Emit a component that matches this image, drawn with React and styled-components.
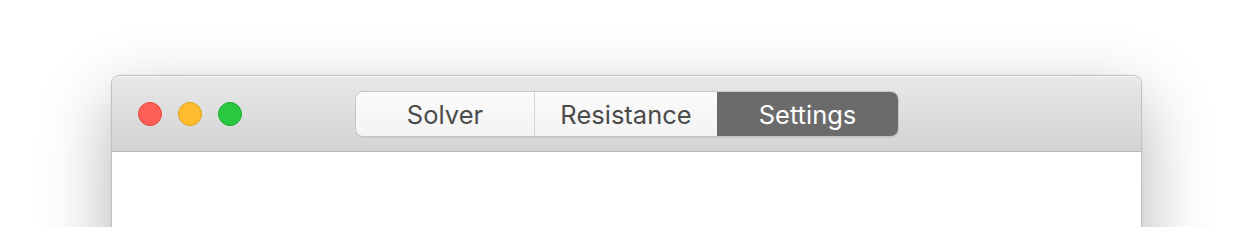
import React, { useState } from "react";
import styled, { createGlobalStyle } from "styled-components";

const GlobalStyle = createGlobalStyle`
  html, body {
    margin: 0;
    padding: 0;
    background: #ffffff;
  }
  body {
    font-family: Inter, "Noto Sans", "Liberation Sans", sans-serif;
    -webkit-font-smoothing: antialiased;
  }
`;

const Stage = styled.div`
  height: 227px;
  overflow: hidden;
  padding: 75px 111px 0;
  box-sizing: border-box;
  background: #ffffff;
`;

const Window = styled.div`
  height: 320px;
  background: #ffffff;
  border: 1px solid #c2c2c2;
  border-bottom: none;
  border-radius: 9px 9px 0 0;
  box-shadow: 0 24px 70px rgba(0, 0, 0, 0.3), 0 0 1px rgba(0, 0, 0, 0.2);
  overflow: hidden;
  box-sizing: border-box;
`;

const TitleBar = styled.div`
  height: 76px;
  box-sizing: border-box;
  display: grid;
  grid-template-columns: 1fr auto 1fr;
  align-items: center;
  padding: 0 25px 0 26px;
  background: linear-gradient(to bottom, #e9e9e9 0%, #d3d3d3 100%);
  border-bottom: 1px solid #b4b4b4;
  box-shadow: inset 0 1px 0 rgba(255, 255, 255, 0.6);
`;

const Lights = styled.div`
  display: flex;
  gap: 16px;
  align-items: center;
  margin-top: 1px;
`;

const Light = styled.span`
  width: 24px;
  height: 24px;
  border-radius: 50%;
  box-sizing: border-box;
  background: ${(p) => p.$fill};
  border: 1px solid ${(p) => p.$ring};
`;

const Segmented = styled.div`
  display: flex;
  height: 46px;
  border-radius: 8px;
  border: 1px solid #c6c6c6;
  box-shadow: 0 1px 0 rgba(0, 0, 0, 0.08);
  background: linear-gradient(to bottom, #fbfbfb, #f3f3f3);
  overflow: hidden;
  box-sizing: border-box;
`;

const Segment = styled.button`
  width: ${(p) => p.$width}px;
  height: 100%;
  margin: 0;
  padding: 2px 0 0;
  border: none;
  border-left: ${(p) => (p.$first ? "none" : "1px solid #d6d6d6")};
  background: ${(p) => (p.$active ? "#6b6b6b" : "transparent")};
  color: ${(p) => (p.$active ? "#ffffff" : "#4b4b4b")};
  font-family: Inter, "Noto Sans", "Liberation Sans", sans-serif;
  font-size: 25.5px;
  font-weight: 400;
  line-height: 1;
  cursor: default;
  outline: none;
`;

const Content = styled.div`
  background: #ffffff;
`;

const tabs = [
  { label: "Solver", width: 178 },
  { label: "Resistance", width: 183 },
  { label: "Settings", width: 181 },
];

export default function App() {
  const [active, setActive] = useState("Settings");

  return (
    <>
      <GlobalStyle />
      <Stage>
        <Window>
          <TitleBar>
            <Lights>
              <Light $fill="#fe5f57" $ring="#e2463f" />
              <Light $fill="#febc2e" $ring="#e1a116" />
              <Light $fill="#29c840" $ring="#1aab29" />
            </Lights>
            <Segmented>
              {tabs.map((t, i) => (
                <Segment
                  key={t.label}
                  $width={t.width}
                  $first={i === 0 || t.label === active || tabs[i - 1].label === active}
                  $active={t.label === active}
                  onClick={() => setActive(t.label)}
                >
                  {t.label}
                </Segment>
              ))}
            </Segmented>
            <span />
          </TitleBar>
          <Content />
        </Window>
      </Stage>
    </>
  );
}
